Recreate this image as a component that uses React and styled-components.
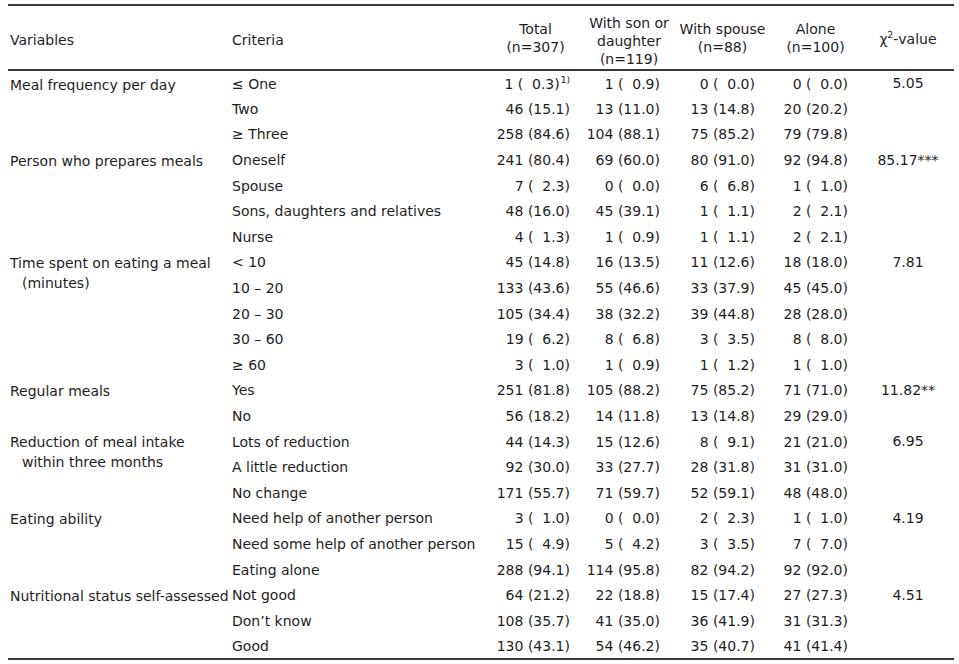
import React from 'react';
import styled, { createGlobalStyle } from 'styled-components';

const groups = [
  {
    variable: ['Meal frequency per day'],
    chi: '5.05',
    rows: [
      ['≤ One', [1, '0.3', '1)'], [1, '0.9'], [0, '0.0'], [0, '0.0']],
      ['Two', [46, '15.1'], [13, '11.0'], [13, '14.8'], [20, '20.2']],
      ['≥ Three', [258, '84.6'], [104, '88.1'], [75, '85.2'], [79, '79.8']]
    ]
  },
  {
    variable: ['Person who prepares meals'],
    chi: '85.17***',
    rows: [
      ['Oneself', [241, '80.4'], [69, '60.0'], [80, '91.0'], [92, '94.8']],
      ['Spouse', [7, '2.3'], [0, '0.0'], [6, '6.8'], [1, '1.0']],
      ['Sons, daughters and relatives', [48, '16.0'], [45, '39.1'], [1, '1.1'], [2, '2.1']],
      ['Nurse', [4, '1.3'], [1, '0.9'], [1, '1.1'], [2, '2.1']]
    ]
  },
  {
    variable: ['Time spent on eating a meal', '(minutes)'],
    chi: '7.81',
    rows: [
      ['< 10', [45, '14.8'], [16, '13.5'], [11, '12.6'], [18, '18.0']],
      ['10 – 20', [133, '43.6'], [55, '46.6'], [33, '37.9'], [45, '45.0']],
      ['20 – 30', [105, '34.4'], [38, '32.2'], [39, '44.8'], [28, '28.0']],
      ['30 – 60', [19, '6.2'], [8, '6.8'], [3, '3.5'], [8, '8.0']],
      ['≥ 60', [3, '1.0'], [1, '0.9'], [1, '1.2'], [1, '1.0']]
    ]
  },
  {
    variable: ['Regular meals'],
    chi: '11.82**',
    rows: [
      ['Yes', [251, '81.8'], [105, '88.2'], [75, '85.2'], [71, '71.0']],
      ['No', [56, '18.2'], [14, '11.8'], [13, '14.8'], [29, '29.0']]
    ]
  },
  {
    variable: ['Reduction of meal intake', 'within three months'],
    chi: '6.95',
    rows: [
      ['Lots of reduction', [44, '14.3'], [15, '12.6'], [8, '9.1'], [21, '21.0']],
      ['A little reduction', [92, '30.0'], [33, '27.7'], [28, '31.8'], [31, '31.0']],
      ['No change', [171, '55.7'], [71, '59.7'], [52, '59.1'], [48, '48.0']]
    ]
  },
  {
    variable: ['Eating ability'],
    chi: '4.19',
    rows: [
      ['Need help of another person', [3, '1.0'], [0, '0.0'], [2, '2.3'], [1, '1.0']],
      ['Need some help of another person', [15, '4.9'], [5, '4.2'], [3, '3.5'], [7, '7.0']],
      ['Eating alone', [288, '94.1'], [114, '95.8'], [82, '94.2'], [92, '92.0']]
    ]
  },
  {
    variable: ['Nutritional status self-assessed'],
    chi: '4.51',
    rows: [
      ['Not good', [64, '21.2'], [22, '18.8'], [15, '17.4'], [27, '27.3']],
      ['Don’t know', [108, '35.7'], [41, '35.0'], [36, '41.9'], [31, '31.3']],
      ['Good', [130, '43.1'], [54, '46.2'], [35, '40.7'], [41, '41.4']]
    ]
  }
];

const columns = [
  { width: 217 },
  { width: 264 },
  { width: 93, pad: 12 },
  { width: 94, pad: 16 },
  { width: 93, pad: 14 },
  { width: 93, pad: 14 },
  { width: 92 }
];

const GlobalStyle = createGlobalStyle`
  body {
    margin: 0;
    background: #fff;
    color: #1e1e1e;
    font-family: "DejaVu Sans", "Liberation Sans", sans-serif;
  }
`;

const Page = styled.div`
  padding: 4px 5px 4px 8px;
`;

const Table = styled.table`
  width: 946px;
  table-layout: fixed;
  border-collapse: collapse;
  font-size: 14px;
  border-top: 2px solid #3a3a3a;
  border-bottom: 2px solid #3a3a3a;
`;

const HeadRow = styled.tr`
  height: 65px;
  border-bottom: 2px solid #3a3a3a;
`;

const HeadCell = styled.th`
  font-weight: normal;
  line-height: 18px;
  padding: ${(p) => p.$shift || 0}px 0 0 ${(p) => p.$indent || 0}px;
  vertical-align: middle;
  text-align: ${(p) => (p.$left ? 'left' : 'center')};
  white-space: nowrap;
`;

const Row = styled.tr`
  height: 25.6px;
`;

const VariableCell = styled.td`
  vertical-align: top;
  padding: 4px 0 0 2px;
  line-height: 20px;
  white-space: nowrap;
`;

const Line = styled.div`
  padding-left: ${(p) => (p.$wrapped ? 12 : 0)}px;
`;

const CriteriaCell = styled.td`
  padding: 1px 0 0 7px;
  white-space: nowrap;
  vertical-align: middle;
`;

const NumberCell = styled.td`
  text-align: right;
  padding: 1px ${(p) => p.$pad}px 0 0;
  white-space: nowrap;
  vertical-align: middle;
`;

const Pct = styled.span`
  display: inline-block;
  min-width: 31px;
  text-align: right;
`;

const Note = styled.sup`
  font-size: 9px;
  line-height: 0;
  margin-left: 1px;
`;

const ChiCell = styled.td`
  padding-top: 1px;
  text-align: center;
  white-space: nowrap;
  vertical-align: middle;
`;

const Chi = styled.span`
  sup {
    font-size: 9px;
    line-height: 0;
  }
`;

const Count = ({ value, pad }) => {
  const [n, pct, note] = value;
  return (
    <NumberCell $pad={pad}>
      {n} (<Pct>{pct}</Pct>){note && <Note>{note}</Note>}
    </NumberCell>
  );
};

const App = () => (
  <Page>
    <GlobalStyle />
    <Table>
      <colgroup>
        {columns.map((c, i) => (
          <col key={i} style={{ width: c.width }} />
        ))}
      </colgroup>
      <thead>
        <HeadRow>
          <HeadCell $left $indent={2} $shift={4}>Variables</HeadCell>
          <HeadCell $left $indent={7} $shift={4}>Criteria</HeadCell>
          <HeadCell>Total<br />(n=307)</HeadCell>
          <HeadCell $shift={6}>With son or<br />daughter<br />(n=119)</HeadCell>
          <HeadCell>With spouse<br />(n=88)</HeadCell>
          <HeadCell>Alone<br />(n=100)</HeadCell>
          <HeadCell $shift={2}>
            <Chi>χ<sup>2</sup>-value</Chi>
          </HeadCell>
        </HeadRow>
      </thead>
      <tbody>
        {groups.map((g) =>
          g.rows.map((r, i) => (
            <Row key={g.variable[0] + r[0]}>
              {i === 0 && (
                <VariableCell rowSpan={g.rows.length}>
                  {g.variable.map((l, j) => (
                    <Line key={l} $wrapped={j > 0}>{l}</Line>
                  ))}
                </VariableCell>
              )}
              <CriteriaCell>{r[0]}</CriteriaCell>
              {r.slice(1).map((v, k) => (
                <Count key={k} value={v} pad={columns[k + 2].pad} />
              ))}
              <ChiCell>{i === 0 ? g.chi : ''}</ChiCell>
            </Row>
          ))
        )}
      </tbody>
    </Table>
  </Page>
);

export default App;
